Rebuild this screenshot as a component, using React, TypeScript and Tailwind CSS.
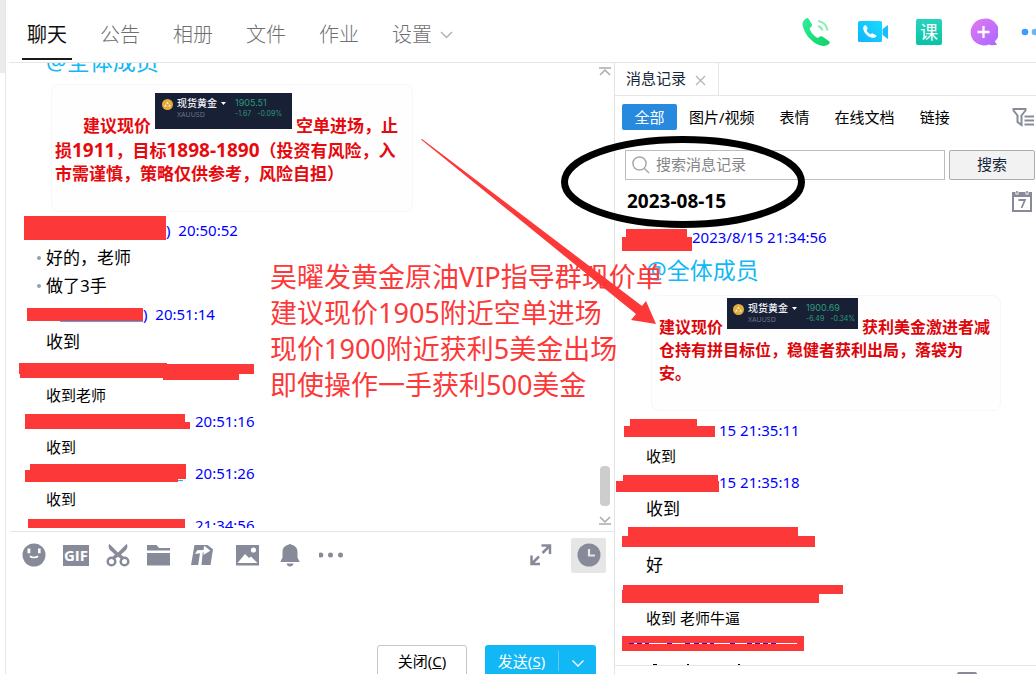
import React from 'react';

const ICON = '#878b99';

type RedactProps = {
  width: number;
  height: number;
  points: string;
  children?: React.ReactNode;
};

function Redaction({ width, height, points, children }: RedactProps) {
  return (
    <svg width={width} height={height} className="shrink-0" aria-hidden="true">
      {children}
      <polygon points={points} fill="#fc3838" />
    </svg>
  );
}

function Row({ tall, children }: { tall?: boolean; children: React.ReactNode }) {
  return <div className={tall ? 'flex h-7 items-center' : 'flex h-[26px] items-center'}>{children}</div>;
}

function Time({ children }: { children: React.ReactNode }) {
  return <time className="whitespace-pre text-[15px] leading-5 text-[#0000ff]">{children}</time>;
}

function Msg({ large, bullet, children }: { large?: boolean; bullet?: boolean; children: React.ReactNode }) {
  return (
    <Row tall={large}>
      <span className="flex w-[31px] shrink-0 justify-end pr-[5px]">
        {bullet && <i className="size-1 rounded-full bg-[#98a3a8]" />}
      </span>
      <p className={large ? 'text-[17px] leading-6' : 'text-[15px] leading-6'}>{children}</p>
    </Row>
  );
}

function Quote({ price, change, percent, small }: { price: string; change: string; percent: string; small?: boolean }) {
  return (
    <div
      className={
        small
          ? 'mx-1 mb-[10px] flex h-[31px] w-[131px] shrink-0 gap-1 bg-[#182036] pl-[6px] pt-1 font-normal'
          : 'mx-1 mb-[9px] flex h-9 w-[137px] shrink-0 gap-1 bg-[#182036] pl-[7px] pt-1 font-normal'
      }
    >
      <svg width="11" height="11" viewBox="0 0 11 11" className="mt-[2px] shrink-0">
        <circle cx="5.5" cy="5.5" r="5.5" fill="#e2ad3c" />
        <path d="M5.5 2.5l1.3 2.2H4.2zM3.4 5.3l1.3 2.3H2.1zM7.6 5.3l1.3 2.3H6.3z" fill="#fff4cf" />
      </svg>
      <div className="w-[54px] shrink-0">
        <div className="flex items-center gap-1 whitespace-nowrap text-[10px] font-medium leading-[13px] text-[#f1f2f5]">
          现货黄金
          <svg width="5" height="3" viewBox="0 0 5 3" className="shrink-0">
            <path d="M0 0h5L2.5 3z" fill="#fff" />
          </svg>
        </div>
        <div className="text-[7px] leading-[9px] text-[#6c7386]">XAUUSD</div>
      </div>
      <div className="whitespace-nowrap text-[#2b9c78]">
        <div className="font-['Inter','Noto_Sans',sans-serif] text-[9px] leading-[12px]">{price}</div>
        <div className="flex gap-[6px] font-['Inter','Noto_Sans',sans-serif] text-[7px] leading-[9px]">
          <span>{change}</span>
          <span>{percent}</span>
        </div>
      </div>
    </div>
  );
}

function Num({ children }: { children: React.ReactNode }) {
  return <span className="text-[19px] leading-6">{children}</span>;
}

const tabs = ['聊天', '公告', '相册', '文件', '作业'];

function Header() {
  return (
    <header className="ml-[3px] flex h-[63px] shrink-0 justify-between border-b border-[#e6e6e6]">
      <nav className="flex gap-[23px] pl-[13px] text-[20px] font-light">
        {tabs.map((t, i) => (
          <a
            key={t}
            href="#"
            className={
              i === 0
                ? 'flex h-[60px] w-[50px] justify-center border-b-2 border-[#1a1a1a] pt-5 font-normal leading-[30px] text-[#111]'
                : 'flex w-[50px] justify-center pt-5 leading-[30px] text-[#6f6f6f]'
            }
          >
            {t}
          </a>
        ))}
        <button type="button" className="ml-[5px] flex h-[50px] items-center gap-2 pt-5 leading-[30px] text-[#6f6f6f]">
          设置
          <svg width="13" height="8" viewBox="0 0 13 8" fill="none" stroke="#b3b3b3" strokeWidth="1.5">
            <path d="M1 1l5.500 5.500L12 1" />
          </svg>
        </button>
      </nav>
      <div className="flex h-16 shrink-0 items-center gap-7">
        <button type="button" aria-label="语音通话">
          <svg width="28" height="28" viewBox="0 0 28 28">
            <defs>
              <linearGradient id="gPhone" x1="0" y1="0" x2="1" y2="1">
                <stop offset="0" stopColor="#2cef9b" />
                <stop offset="1" stopColor="#0fd364" />
              </linearGradient>
            </defs>
            <path
              d="M4.600.3C5.400-.1 6.200.2 6.700.9l3 5.200c.5.900.3 1.900-.4 2.600L7.600 10.300c.6 3.600 4.300 8 8.300 9.800l2-1.500c.8-.6 1.900-.6 2.600 0l6.600 4.700c.8.700.9 1.500.3 2.300-2.200 2.400-5.600 2.900-9.500 1.700C9.500 24.600 1.700 15.200.5 6.500.3 3.700 2.100 1.600 4.600.3z"
              fill="url(#gPhone)"
            />
            <path d="M16 3c5.300.8 8.800 4.500 9.500 9.500M16 8c2.600.8 3.900 2.200 4.500 4.600" fill="none" stroke="#8aefb8" strokeWidth="2.200" />
          </svg>
        </button>
        <button type="button" aria-label="视频通话">
          <svg width="30" height="22" viewBox="0 0 30 22">
            <defs>
              <linearGradient id="gCam" x1="0" y1="1" x2="1" y2="0">
                <stop offset="0" stopColor="#12b4fd" />
                <stop offset="1" stopColor="#16dcff" />
              </linearGradient>
            </defs>
            <rect y="0" width="24" height="21" rx="1.500" fill="url(#gCam)" />
            <path d="M24.500 8L30 4v14l-5.500-4z" fill="#19bdf9" />
            <path
              d="M7 4.300c.6-.3 1-.1 1.300.4l1.300 2.300c.2.500.1.900-.3 1.200l-.8.700c.5 1.800 2.200 3.600 4.100 4.300l1-.8c.4-.3.800-.3 1.200 0l3.200 1.800c.6.400.7.900.3 1.400-1.100 1.300-2.900 1.500-4.900.9C9.200 15.300 5.500 11.200 5.200 7.200 5.100 6 5.800 4.900 7 4.300z"
              fill="#fff"
            />
          </svg>
        </button>
        <button
          type="button"
          className="flex size-[26px] items-center justify-center rounded-[2px] bg-gradient-to-b from-[#25d4c0] to-[#05c3a5] text-[18px] leading-none text-white"
        >
          课
        </button>
        <button type="button" aria-label="添加">
          <svg width="28" height="28" viewBox="0 0 28 28">
            <defs>
              <linearGradient id="gPlus" x1="0" y1="0" x2="1" y2="1">
                <stop offset="0" stopColor="#e277f3" />
                <stop offset="1" stopColor="#a968ff" />
              </linearGradient>
            </defs>
            <path d="M13.500.8a13.300 13.300 0 1 0 5.500 25.600c1 .9 4.500 1 8.200.4l-2.400-3.200A13.300 13.300 0 0 0 13.500.8z" fill="url(#gPlus)" />
            <path d="M13.500 8v12M7.500 14h12" stroke="#fff" strokeWidth="2.300" />
          </svg>
        </button>
        <button type="button" aria-label="更多" className="-ml-2">
          <svg width="18" height="8" viewBox="0 0 18 8">
            <circle cx="7" cy="4" r="3.300" fill="#3d99fc" />
            <circle cx="17" cy="4" r="3.300" fill="#6fb3fd" />
          </svg>
        </button>
      </div>
    </header>
  );
}

function MessageList() {
  return (
    <div className="flex min-h-0 flex-1">
      <div className="mb-[3px] min-w-0 flex-1 overflow-hidden pl-[9px]">
        <div className="-mt-4 pl-[31px] text-[23px] leading-7 text-[#12b7f5]">@全体成员</div>
        <div className="ml-9 mt-[9px] h-32 w-[362px] rounded-lg border border-[#f7f7f7] bg-[#fefefe] pl-[3px] pt-2 text-[17px] font-bold leading-6 text-[#e60a0f]">
          <div className="flex items-end whitespace-nowrap pl-7">
            <span>建议现价</span>
            <Quote price="1905.51" change="-1.67" percent="-0.09%" />
            <span>空单进场，止</span>
          </div>
          <p className="h-6 whitespace-nowrap">
            损<Num>1911</Num>，目标<Num>1898-1890</Num>（投资有风险，入
          </p>
          <p className="h-6 whitespace-nowrap">市需谨慎，策略仅供参考，风险自担）</p>
        </div>
        <div className="mt-1">
          <Row tall>
            <Redaction width={151} height={28} points="9,0 151,0 151,24 9,24" />
            <Time>{')  20:50:52'}</Time>
          </Row>
        </div>
        <Msg large bullet>好的，老师</Msg>
        <Msg large bullet>做了3手</Msg>
        <Row tall>
          <Redaction width={128} height={28} points="12,8 130,8 130,21 12,21">
            <path d="M45 21.500h84" stroke="#3fa9f5" />
          </Redaction>
          <Time>{')  20:51:14'}</Time>
        </Row>
        <Msg large>收到</Msg>
        <Row>
          <Redaction width={240} height={26} points="4,7 152,7 152,8 239,8 239,18 224,18 224,24 148,24 148,22 5,22 5,18 4,18" />
        </Row>
        <Msg>收到老师</Msg>
        <Row>
          <Redaction width={180} height={26} points="10,6 170,6 170,14 175,14 175,21 10,21" />
          <Time>20:51:16</Time>
        </Row>
        <Msg>收到</Msg>
        <Row>
          <Redaction width={180} height={26} points="15,4 171,4 171,19 163,19 163,22 10,22 10,10 15,10">
            <path d="M163 20.500h5" stroke="#12b7f5" />
          </Redaction>
          <Time>20:51:26</Time>
        </Row>
        <Msg>收到</Msg>
        <Row>
          <Redaction width={180} height={26} points="13,7 170,7 170,26 13,26" />
          <Time>21:34:56</Time>
        </Row>
      </div>
      <div className="mr-[3px] flex w-3 shrink-0 flex-col items-center justify-between pb-[5px] pt-1">
        <svg width="12" height="10" viewBox="0 0 12 10" fill="none" stroke="#aaa" strokeWidth="1.500">
          <path d="M0 1h12M1 8l5-5 5 5" />
        </svg>
        <div className="flex flex-col items-center gap-[10px]">
          <div className="h-10 w-[10px] rounded-[4px] bg-[#cdcdcd]" />
          <svg width="12" height="10" viewBox="0 0 12 10" fill="none" stroke="#aaa" strokeWidth="1.500">
            <path d="M0 8h12M1 1l5 5 5-5" />
          </svg>
        </div>
      </div>
    </div>
  );
}

function Composer() {
  return (
    <section className="ml-1 flex h-[143px] shrink-0 flex-col border-t border-[#e6e6e6]">
      <div className="flex h-[46px] shrink-0 items-center justify-between pl-3 pr-2">
        <div className="flex items-center gap-[17px]">
          <button type="button" aria-label="表情">
            <svg width="24" height="24" viewBox="0 0 24 24">
              <circle cx="12" cy="12" r="11.500" fill={ICON} />
              <path d="M5.500 5.500h2.800v4.800H5.500zM16 5.500h2.600v4.800H16z" fill="#fff" />
              <path d="M8 13c1.200 2 6.600 2 8 0" fill="none" stroke="#fff" strokeWidth="1.600" />
            </svg>
          </button>
          <button
            type="button"
            className="flex h-[21px] w-[26px] items-center justify-center bg-[#878b99] font-['Open_Sans','Noto_Sans',sans-serif] text-[15px] font-bold leading-none text-white"
          >
            GIF
          </button>
          <button type="button" aria-label="截图">
            <svg width="24" height="24" viewBox="0 0 24 24" fill="none" stroke={ICON}>
              <path
                d="M3.200.8C2 3.500 2.500 5.500 4.500 7.500l4.500 4-3.500 3.300 2 2.200L12 13.800l4.500 3.200 2-2.200L15 11.500l4.500-4c2-2 2.500-4 1.300-6.700L12 9.500z"
                fill={ICON}
                stroke="none"
              />
              <circle cx="5.500" cy="18.500" r="3.800" strokeWidth="2.500" />
              <circle cx="18.500" cy="18.500" r="3.800" strokeWidth="2.500" />
            </svg>
          </button>
          <button type="button" aria-label="文件">
            <svg width="24" height="24" viewBox="0 0 24 24" fill={ICON}>
              <path d="M0 2h9.500l2.500 3h11v2.500H0zM0 10h23v12.500H0z" />
            </svg>
          </button>
          <button type="button" aria-label="文档">
            <svg width="28" height="24" viewBox="0 0 28 24" fill={ICON}>
              <path d="M6.500 2h13L25 6.300 22.500 22H3z" />
              <path d="M7 11l2.200-3.800 6.300-.2.800-4.200 6 5-7 4.300.6-2.600-1.200.1L13.500 22h-3.300L12 10.200z" fill="#fff" />
            </svg>
          </button>
          <button type="button" aria-label="图片">
            <svg width="28" height="24" viewBox="0 0 28 24">
              <rect x="3" y="2" width="23" height="20.500" fill={ICON} />
              <path d="M4.500 20l7.500-9 4 4 2-1.500 6.500 6.500z" fill="#fff" />
              <circle cx="20.500" cy="7" r="2.600" fill="#fff" />
            </svg>
          </button>
          <button type="button" aria-label="提醒">
            <svg width="24" height="24" viewBox="0 0 24 24" fill={ICON}>
              <path d="M11 1.500a1.200 1.200 0 0 1 2 0c4 .8 6.500 3.500 6.500 7.500v5.500l2 4v.5H2.500v-.5l2-4V9C4.500 5 7 2.300 11 1.500zM8.500 20.500h7c-.5 4-6.500 4-7 0z" />
            </svg>
          </button>
          <button type="button" aria-label="更多">
            <svg width="26" height="24" viewBox="0 0 26 24" fill={ICON}>
              <circle cx="1.800" cy="12" r="2.500" />
              <circle cx="11.500" cy="12" r="2.500" />
              <circle cx="21.500" cy="12" r="2.500" />
            </svg>
          </button>
        </div>
        <div className="flex items-center gap-[19px]">
          <button type="button" aria-label="展开">
            <svg width="22" height="22" viewBox="0 0 22 22" fill="none" stroke={ICON} strokeWidth="2.500">
              <path d="M11.500 1.500h8.500v8.500M20 1.500l-7.500 7.500M1.500 11.500v8.500h8.500M1.500 20l7.500-7.500" />
            </svg>
          </button>
          <button type="button" aria-label="消息记录" className="flex size-[35px] items-center justify-center rounded-[2px] bg-[#e6e6e6]">
            <svg width="24" height="24" viewBox="0 0 24 24">
              <circle cx="12" cy="12" r="11.500" fill={ICON} />
              <path d="M12 6v6.500h6" fill="none" stroke="#e6e6e6" strokeWidth="2.200" />
            </svg>
          </button>
        </div>
      </div>
      <textarea aria-label="输入消息" className="h-[67px] shrink-0 resize-none px-3 outline-none" />
      <div className="flex shrink-0 justify-end gap-[18px] pr-[18px] text-[15px]">
        <button type="button" className="h-8 w-[90px] rounded-[3px] border border-[#c6c6c6] text-black">
          关闭(<u>C</u>)
        </button>
        <div className="flex h-8 w-[111px] rounded-[3px] bg-[#12b7f5] text-white">
          <button type="button" className="my-[6px] flex-1 border-r border-[#5dcdf8] leading-5">
            发送(<u>S</u>)
          </button>
          <button type="button" aria-label="发送选项" className="flex w-[37px] items-center justify-center pt-1">
            <svg width="12" height="7" viewBox="0 0 12 7" fill="none" stroke="#fff" strokeWidth="1.300">
              <path d="M.5.5L6 6l5.500-5.500" />
            </svg>
          </button>
        </div>
      </div>
    </section>
  );
}

function History() {
  return (
    <aside className="flex w-[422px] shrink-0 flex-col border-l border-[#e3e3e3]">
      <div className="flex h-[33px] shrink-0 border-b border-[#e6e6e6]">
        <div className="flex items-center gap-[9px] border-r border-[#e6e6e6] pb-px pl-[11px] pr-3 text-[15px] text-[#16263a]">
          消息记录
          <button type="button" aria-label="关闭标签">
            <svg width="11" height="11" viewBox="0 0 11 11" stroke="#b5b5b5" strokeWidth="1.300" className="mt-1">
              <path d="M1 1l9 9M10 1l-9 9" />
            </svg>
          </button>
        </div>
      </div>
      <div className="flex h-[42px] shrink-0 items-center justify-between pl-[7px] pr-px text-[15px] text-black">
        <div className="flex items-center gap-[25px] whitespace-nowrap">
          <div className="flex items-center gap-3">
            <button type="button" className="h-[26px] w-[55px] rounded-[2px] bg-[#288ade] text-white">全部</button>
            <button type="button">图片/视频</button>
          </div>
          <button type="button">表情</button>
          <button type="button">在线文档</button>
          <button type="button">链接</button>
        </div>
        <button type="button" aria-label="筛选">
          <svg width="23" height="20" viewBox="0 0 23 20" fill="none" stroke={ICON} strokeWidth="2">
            <path d="M1.500 2h12v1.500L9.500 8.500v9.500l-4-3V8.500L1.500 3.500z" />
            <path d="M12.500 9.500H22M12.500 13.500H22M12.500 17.500H22" />
          </svg>
        </button>
      </div>
      <form className="mt-3 flex h-[30px] shrink-0 gap-1 pl-[10px] pr-px text-[15px]" onSubmit={(e) => e.preventDefault()}>
        <label className="flex min-w-0 flex-1 items-center gap-[6px] border border-[#bdbdbd] pb-px pl-[6px]">
          <svg width="18" height="18" viewBox="0 0 18 18" fill="none" stroke="#a5a9ad" strokeWidth="1.500" className="shrink-0">
            <circle cx="7.500" cy="7.500" r="6.600" />
            <path d="M12.500 12.500l4.500 4.500" />
          </svg>
          <input
            type="text"
            aria-label="搜索消息记录"
            placeholder="搜索消息记录"
            className="min-w-0 flex-1 outline-none placeholder:text-[#858585]"
          />
        </label>
        <button type="submit" className="w-[86px] shrink-0 rounded-[2px] border border-[#adadad] bg-[#f2f2f2] pb-px text-[#16263a]">
          搜索
        </button>
      </form>
      <div className="mb-2 min-h-0 flex-1 overflow-hidden border-b border-[#e6e6e6]">
        <div className="flex h-[42px] items-center justify-between pl-3 pr-1">
          <h2 className="font-['Noto_Sans',sans-serif] text-[19px] font-bold leading-6 text-black">2023-08-15</h2>
          <button type="button" aria-label="选择日期">
            <svg width="20" height="21" viewBox="0 0 20 21">
              <path d="M0 1h3.500v2.500h3V1h7v2.500h3V1H20v20H0z" fill={ICON} />
              <path d="M4.200 0h1.600v2.500H4.200zM14.200 0h1.600v2.500h-1.600z" fill={ICON} />
              <path d="M2 6h16v13H2z" fill="#fff" />
              <path d="M6.500 9h6.500l-3.500 8" fill="none" stroke={ICON} strokeWidth="1.800" />
            </svg>
          </button>
        </div>
        <div className="flex h-[30px] items-center">
          <Redaction width={77} height={30} points="11,7 72,7 72,15 80,15 80,29 7,29 7,15 11,15" />
          <Time>2023/8/15 21:34:56</Time>
        </div>
        <div className="py-1 pl-[31px] text-[23px] leading-7 text-[#12b7f5]">@全体成员</div>
        <div className="mb-[6px] ml-9 mt-[7px] h-[116px] w-[350px] rounded-lg border border-[#f7f7f7] bg-[#fefefe] pl-[7px] pt-[2px] text-[16px] font-bold leading-6 text-[#dd060b]">
          <div className="flex items-end whitespace-nowrap">
            <span>建议现价</span>
            <Quote small price="1900.69" change="-6.49" percent="-0.34%" />
            <span>获利美金激进者减</span>
          </div>
          <p className="leading-[23px]">
            仓持有拼目标位，稳健者获利出局，落袋为
            <br />
            安。
          </p>
        </div>
        <Row>
          <Redaction width={104} height={26} points="15,2 82,2 82,9 100,9 100,20 9,20 9,9 15,9" />
          <Time>15 21:35:11</Time>
        </Row>
        <Msg>收到</Msg>
        <Row>
          <Redaction width={104} height={26} points="8,6 103,6 103,12 105,12 105,23 1,23 1,12 8,12" />
          <Time>15 21:35:18</Time>
        </Row>
        <Msg large>收到</Msg>
        <Row tall>
          <Redaction width={210} height={28} points="13,4 183,4 183,13 200,13 200,24 7,24 7,13 13,13" />
        </Row>
        <Msg large>好</Msg>
        <Row>
          <Redaction width={240} height={26} points="8,6 228,6 228,15 204,15 204,24 7,24 7,11 8,11" />
        </Row>
        <Msg>收到 老师牛逼</Msg>
        <Row>
          <svg width="200" height="26" aria-hidden="true">
            <path d="M7 5h182v15H7z" fill="#fc3838" />
            <path d="M14 12.500h168" stroke="#fff" />
            <path d="M14 12.500h20M52 12.500h8M70 12.500h6M79 12.500h20M115 12.500h6M132 12.500h32" stroke="#2a12d8" strokeDasharray="5 3" />
          </svg>
        </Row>
        <svg width="200" height="8" aria-hidden="true">
          <path d="M38 7.500h4M72 7.500h2M123 7.500h2" stroke="#000" />
        </svg>
      </div>
      <div className="-mt-[2px] mr-[59px] h-[2px] w-5 shrink-0 self-end rounded-t-[2px] bg-[#878b99]" />
    </aside>
  );
}

function Annotations() {
  return (
    <div className="pointer-events-none absolute inset-0 overflow-hidden">
      <p className="absolute left-[270px] top-[259px] whitespace-nowrap text-[27px] leading-9 text-[#fc3838]">
        吴曜发黄金原油VIP指导群现价单
        <br />
        建议现价1905附近空单进场
        <br />
        现价1900附近获利5美金出场
        <br />
        即使操作一手获利500美金
      </p>
      <svg className="absolute left-[415px] top-[130px]" width="400" height="205" aria-hidden="true">
        <path d="M6 9.500L7 9 227 176l4-5 10 23-25-4 5-6z" fill="#fc3838" />
        <ellipse cx="268" cy="52" rx="118.500" ry="42.500" fill="none" stroke="#000" strokeWidth="7" />
      </svg>
    </div>
  );
}

export default function App() {
  return (
    <div className="relative flex h-screen overflow-hidden bg-white font-['Noto_Sans','Noto_Sans_CJK_SC',sans-serif] text-black">
      <div className="h-[73px] w-[5px] shrink-0 bg-[#ebebeb]" />
      <div className="flex min-w-0 flex-1 flex-col border-l border-[#e6e6e6]">
        <Header />
        <div className="flex min-h-0 flex-1">
          <main className="flex min-w-0 flex-1 flex-col">
            <MessageList />
            <Composer />
          </main>
          <History />
        </div>
      </div>
      <Annotations />
    </div>
  );
}
